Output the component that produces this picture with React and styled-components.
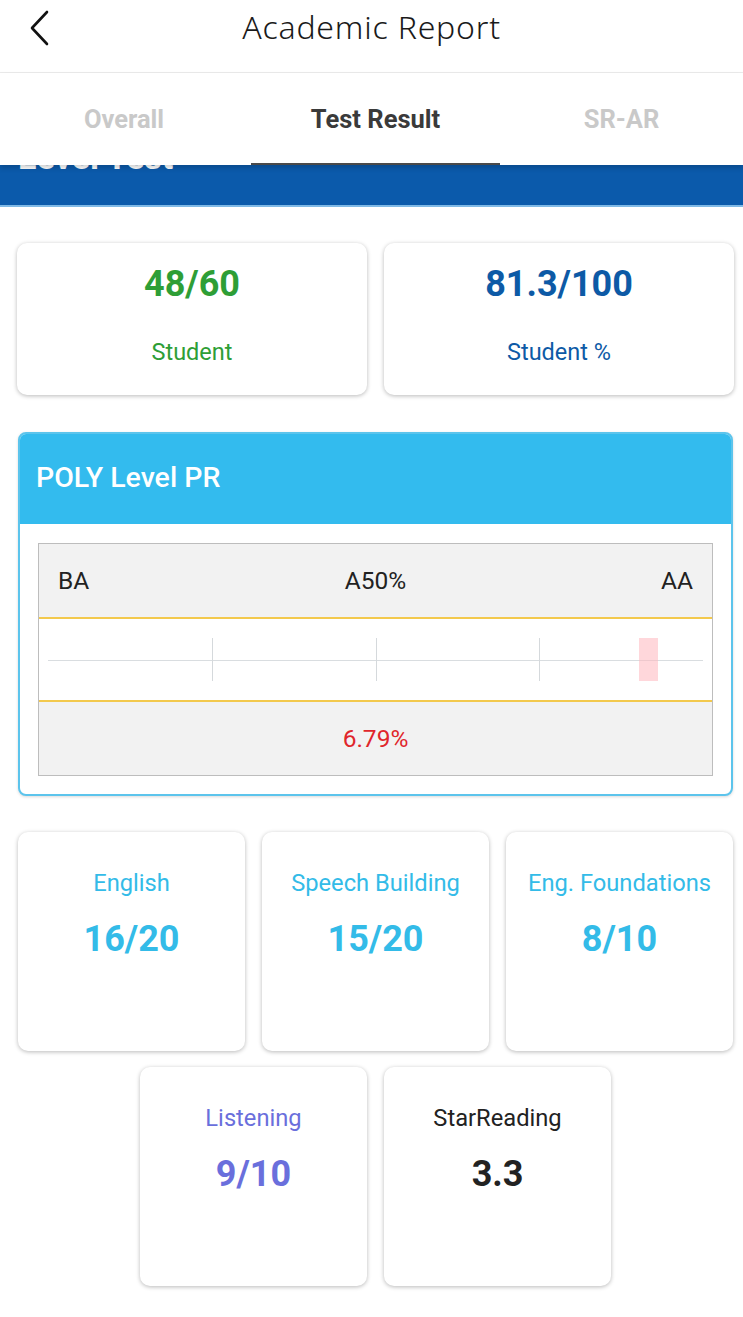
import React from 'react';
import styled, {createGlobalStyle} from 'styled-components';

const GlobalStyle = createGlobalStyle`
	html, body {
		margin: 0;
		padding: 0;
		background: #fff;
		font-family: Roboto, "Noto Sans", Arial, sans-serif;
	}
	* { box-sizing: border-box; }
`;

const Page = styled.div`
	width: 743px;
	min-height: 1317px;
	background: #fff;
`;

const Header = styled.header`
	height: 73px;
	display: flex;
	align-items: center;
	justify-content: center;
	position: relative;
	border-bottom: 1px solid #ececec;
`;

const BackButton = styled.button`
	position: absolute;
	left: 22px;
	top: 8px;
	width: 36px;
	height: 40px;
	padding: 0;
	border: none;
	background: transparent;
	display: flex;
	align-items: center;
	justify-content: center;
`;

const Title = styled.h1`
	margin: 0 0 20px;
	font-family: "Noto Sans", Roboto, sans-serif;
	font-weight: 300;
	font-size: 32px;
	letter-spacing: 0.8px;
	color: #1a1a1a;
`;

const TabBar = styled.nav`
	height: 92px;
	display: grid;
	grid-template-columns: 248px 252px 1fr;
	background: #fff;
	position: relative;
	z-index: 2;
	box-shadow: 0 3px 5px rgba(0, 0, 0, 0.18);
`;

const Tab = styled.div`
	display: flex;
	align-items: center;
	justify-content: center;
	padding-top: 2px;
	font-size: 25.5px;
	font-weight: 700;
	color: ${p => p.active ? '#3a3a3a' : '#c9c9c9'};
	border-bottom: 2px solid ${p => p.active ? '#4a4a4a' : 'transparent'};
	margin: ${p => p.active ? '0 0 0 3px' : '0'};
`;

const Banner = styled.div`
	height: 42px;
	background: #0b5aab;
	border-bottom: 2px solid #7fb9e6;
	overflow: hidden;
	padding-left: 18px;
`;

const BannerTitle = styled.div`
	margin-top: -25px;
	font-size: 34px;
	font-weight: 700;
	color: #fff;
	line-height: 34px;
`;

const Content = styled.main`
	padding: 36px 9px 32px 17px;
	display: flex;
	flex-direction: column;
	gap: 37px;
`;

const Card = styled.div`
	background: #fff;
	border-radius: 10px;
	box-shadow: 0 1px 4px rgba(0, 0, 0, 0.28);
`;

const ScoreRow = styled.div`
	display: grid;
	grid-template-columns: 1fr 1fr;
	gap: 17px;
`;

const ScoreCard = styled(Card)`
	height: 152px;
	display: flex;
	flex-direction: column;
	align-items: center;
	padding-top: 20px;
	color: ${p => p.color};
`;

const ScoreValue = styled.div`
	font-size: 36px;
	font-weight: 700;
	line-height: 42px;
`;

const ScoreLabel = styled.div`
	margin-top: 33px;
	font-size: 23.5px;
	line-height: 28px;
`;

const PolyCard = styled.section`
	margin: 0 1px 0 1px;
	border: 2px solid #5cc4ec;
	border-radius: 8px;
	overflow: hidden;
	background: #fff;
	box-shadow: 0 1px 3px rgba(0, 0, 0, 0.15);
`;

const PolyHeader = styled.div`
	height: 90px;
	background: #33bbee;
	display: flex;
	align-items: center;
	padding-left: 16px;
	padding-bottom: 4px;
	font-size: 28.5px;
	font-weight: 500;
	color: #fff;
`;

const PolyBody = styled.div`
	padding: 19px 18px 18px 18px;
`;

const LevelTable = styled.div`
	border: 1px solid #bdbdbd;
	background: #f2f2f2;
`;

const LabelRow = styled.div`
	height: 73px;
	display: grid;
	grid-template-columns: 1fr 1fr 1fr;
	align-items: center;
	padding: 0 19px;
	font-size: 24.5px;
	color: #222;
`;

const Label = styled.span`
	text-align: ${p => p.align};
`;

const TrackRow = styled.div`
	height: 85px;
	background: #fff;
	border-top: 2px solid #f3c94d;
	border-bottom: 2px solid #f3c94d;
	padding: 19px 9px;
`;

const Track = styled.div`
	position: relative;
	height: 100%;
	&::before {
		content: '';
		position: absolute;
		left: 0;
		right: 0;
		top: 50%;
		height: 1px;
		background: #d9dde0;
	}
`;

const Tick = styled.div`
	position: absolute;
	top: 0;
	bottom: 0;
	width: 1px;
	background: #d5d9dc;
`;

const Marker = styled.div`
	position: absolute;
	top: 0;
	bottom: 0;
	width: 19px;
	background: rgba(255, 182, 190, 0.55);
`;

const ResultRow = styled.div`
	height: 73px;
	display: flex;
	align-items: center;
	justify-content: center;
	font-size: 24.5px;
	color: #e0262b;
`;

const SubjectGrid = styled.div`
	display: flex;
	flex-wrap: wrap;
	justify-content: center;
	gap: 16px 17px;
	margin-top: -1px;
`;

const SubjectCard = styled(Card)`
	width: 227px;
	height: 219px;
	display: flex;
	flex-direction: column;
	align-items: center;
	padding-top: 36px;
	color: ${p => p.color};
`;

const SubjectLabel = styled.div`
	font-size: 23.7px;
	line-height: 30px;
	white-space: nowrap;
`;

const SubjectValue = styled.div`
	margin-top: 20px;
	font-size: 36px;
	font-weight: 700;
	line-height: 42px;
`;

const CYAN = '#33bbe8';
const PURPLE = '#6a6fdc';

const subjects = [
	{label: 'English', value: '16/20', color: CYAN},
	{label: 'Speech Building', value: '15/20', color: CYAN},
	{label: 'Eng. Foundations', value: '8/10', color: CYAN},
	{label: 'Listening', value: '9/10', color: PURPLE},
	{label: 'StarReading', value: '3.3', color: '#222'},
];

const ticks = [25, 50, 75];
const markerLeft = 90.2;

function BackIcon()
{
	return <svg width="22" height="36" viewBox="0 0 22 36" fill="none">
		<polyline points="18,2 3,18 18,34" stroke="#111" strokeWidth="2.6" strokeLinecap="round" strokeLinejoin="round" />
	</svg>;
}

function App()
{
	return <Page>
		<GlobalStyle />
		<Header>
			<BackButton aria-label="back"><BackIcon /></BackButton>
			<Title>Academic Report</Title>
		</Header>
		<TabBar>
			<Tab>Overall</Tab>
			<Tab active>Test Result</Tab>
			<Tab>SR-AR</Tab>
		</TabBar>
		<Banner>
			<BannerTitle>Level Test</BannerTitle>
		</Banner>
		<Content>
			<ScoreRow>
				<ScoreCard color="#2e9e36">
					<ScoreValue>48/60</ScoreValue>
					<ScoreLabel>Student</ScoreLabel>
				</ScoreCard>
				<ScoreCard color="#0d5aa6">
					<ScoreValue>81.3/100</ScoreValue>
					<ScoreLabel>Student %</ScoreLabel>
				</ScoreCard>
			</ScoreRow>

			<PolyCard>
				<PolyHeader>POLY Level PR</PolyHeader>
				<PolyBody>
					<LevelTable>
						<LabelRow>
							<Label align="left">BA</Label>
							<Label align="center">A50%</Label>
							<Label align="right">AA</Label>
						</LabelRow>
						<TrackRow>
							<Track>
								{ticks.map(t => <Tick key={t} style={{left: `${t}%`}} />)}
								<Marker style={{left: `${markerLeft}%`}} />
							</Track>
						</TrackRow>
						<ResultRow>6.79%</ResultRow>
					</LevelTable>
				</PolyBody>
			</PolyCard>

			<SubjectGrid>
				{subjects.map(({label, value, color}) =>
					<SubjectCard key={label} color={color}>
						<SubjectLabel>{label}</SubjectLabel>
						<SubjectValue>{value}</SubjectValue>
					</SubjectCard>
				)}
			</SubjectGrid>
		</Content>
	</Page>;
}

export default App;
